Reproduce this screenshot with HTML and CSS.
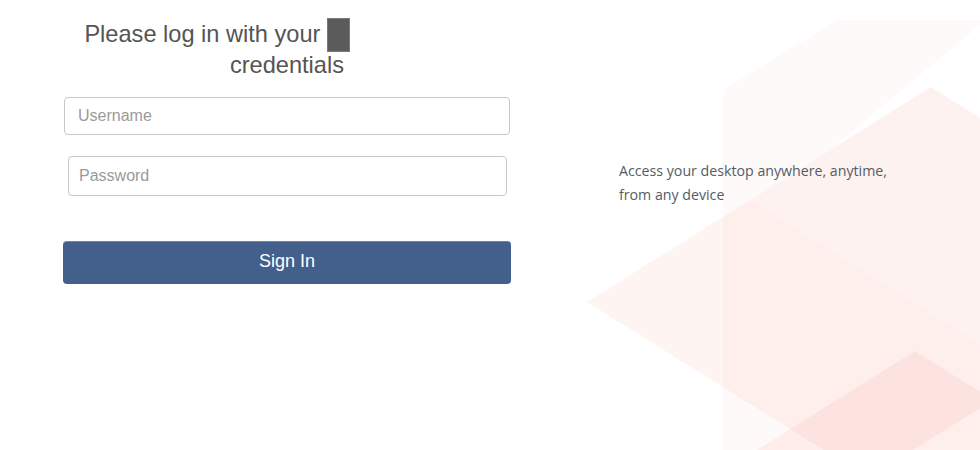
FILE: index.html
```html
<!DOCTYPE html>
<html lang="en">
<head>
<meta charset="utf-8">
<title>Sign in</title>
<link rel="stylesheet" href="styles.css">
</head>
<body>
<svg class="backdrop" viewBox="0 0 980 450" preserveAspectRatio="none" aria-hidden="true">
  <polygon class="shade panel" points="723,90 837,20 980,20 980,450 723,450"/>
  <polygon class="gap" points="830,150 980,25 980,118 931,87"/>
  <polygon class="shade d1" points="931,87 1275,302 931,517 587,302"/>
  <polygon class="shade d2" points="587,302 750,200 1150,450 987,552"/>
  <polygon class="shade d3" points="915,351 993,400 835,499 757,450"/>
</svg>
<main class="page">
  <section class="login">
    <h1 class="title">Please log in with your <span class="redact"></span> credentials</h1>
    <form class="form">
      <input class="field field-user" type="text" placeholder="Username">
      <input class="field field-pass" type="password" placeholder="Password">
      <button class="signin" type="button">Sign In</button>
    </form>
  </section>
  <aside class="tagline">
    <p class="tagline-text">Access your desktop anywhere, anytime,<br>from any device</p>
  </aside>
</main>
</body>
</html>
```
FILE: styles.css
```css
html, body {
  margin: 0;
  padding: 0;
  background: #ffffff;
}

body {
  position: relative;
  width: 980px;
  height: 450px;
  overflow: hidden;
  font-family: "Liberation Sans", Arial, sans-serif;
}

.backdrop {
  position: absolute;
  left: 0;
  top: 0;
  width: 980px;
  height: 450px;
  z-index: 0;
}

.shade { fill: rgb(244, 110, 88); }
.panel { fill-opacity: 0.03; }
.gap { fill: #ffffff; fill-opacity: 0.85; }
.d1 { fill-opacity: 0.055; }
.d2 { fill-opacity: 0.025; }
.d3 { fill-opacity: 0.09; }

.page {
  position: relative;
  z-index: 1;
  display: flex;
  align-items: flex-start;
}

.login {
  width: 448px;
  padding-left: 63px;
  padding-top: 18px;
}

.title {
  width: 281px;
  margin: 0;
  font-size: 23.6px;
  font-weight: normal;
  line-height: normal;
  color: #555555;
  text-align: right;
}

.redact {
  display: inline-block;
  width: 23px;
  height: 34px;
  margin-right: -6px;
  vertical-align: -10px;
  background: #5b5b5b;
  box-shadow: inset 0 0 0 1px #7a7a7a;
}

.form {
  display: flex;
  flex-direction: column;
  align-items: flex-start;
  margin-top: 18px;
}

.field {
  box-sizing: border-box;
  border: 1px solid #c8c8c8;
  border-radius: 4px;
  background: #ffffff;
  font-family: "Liberation Sans", Arial, sans-serif;
  font-size: 16px;
  color: #333333;
  outline: none;
}

.field::placeholder {
  color: #9a9a9a;
}

.field-user {
  width: 446px;
  height: 38px;
  margin-left: 1px;
  padding: 0 13px;
}

.field-pass {
  width: 439px;
  height: 40px;
  margin-left: 5px;
  margin-top: 21px;
  padding: 0 10px;
}

.signin {
  box-sizing: border-box;
  width: 448px;
  height: 43px;
  margin-top: 45px;
  padding: 0 0 4px;
  border: none;
  border-top: 1px solid #6f86a8;
  border-radius: 4px;
  background: #435f8b;
  color: #ffffff;
  font-family: "Liberation Sans", Arial, sans-serif;
  font-size: 18px;
  cursor: pointer;
}

.tagline {
  margin-left: 108px;
  padding-top: 159px;
}

.tagline-text {
  margin: 0;
  font-family: "Open Sans", "Noto Sans", sans-serif;
  font-size: 14.2px;
  line-height: 24px;
  color: #545b64;
}
```
